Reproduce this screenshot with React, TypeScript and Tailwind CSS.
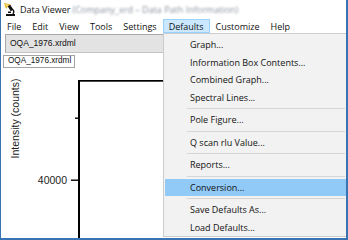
import React from "react";

const menuBar = ["File", "Edit", "View", "Tools", "Settings", "Defaults", "Customize", "Help"];

// null = separator
const defaultsMenu: (string | null)[] = [
  "Graph...",
  "Information Box Contents...",
  "Combined Graph...",
  "Spectral Lines...",
  null,
  "Pole Figure...",
  null,
  "Q scan rlu Value...",
  null,
  "Reports...",
  null,
  "Conversion...",
  null,
  "Save Defaults As...",
  "Load Defaults...",
];

function AppIcon() {
  return (
    <svg width="13" height="13" viewBox="0 0 13 13">
      <polygon points="0,0 7,1.5 4,3.5 2,6" fill="#e6b526" />
      <polygon points="1,1 5,2 3,4" fill="#f7dd7a" />
      <rect x="5" y="2" width="3" height="6" transform="rotate(-30 6.5 5)" fill="#111" />
      <path d="M8 6 Q11 8 9 11" stroke="#111" strokeWidth="1.4" fill="none" />
      <rect x="4" y="8.5" width="3" height="1.5" fill="#111" />
      <rect x="2" y="11" width="9" height="2" fill="#111" />
    </svg>
  );
}

export default function App() {
  return (
    <div className="relative w-[348px] h-[240px] overflow-hidden bg-white border-l border-r-2 border-b-2 border-[#3873b3] font-['Open_Sans',sans-serif] text-[9px] text-[#111] leading-none">
      {/* title bar */}
      <div className="flex items-center h-[18px] pl-[3px]">
        <AppIcon />
        <span className="ml-[3px]">Data Viewer</span>
        <span className="ml-[2px] text-[#8a93a0] blur-[1.3px] whitespace-nowrap">(Company_xrd – Data Path Information)</span>
      </div>

      {/* menu bar */}
      <div className="flex h-[15px] pt-[1px] pl-[1px] gap-[1px]">
        {menuBar.map((m) => (
          <div
            key={m}
            className={`flex items-center px-[5px] ${m === "Defaults" ? "bg-[#cce8ff] border border-[#99d1ff] px-[4px]" : ""}`}
          >
            {m}
          </div>
        ))}
      </div>

      {/* document area */}
      <div className="flex items-center ml-[4px] mt-[1px] w-[200px] h-[19px] bg-[#e3e3e3] border border-[#c4c4c4] border-t-[#a9a9a9] border-l-[#a9a9a9] pl-[4px] font-['Liberation_Sans',sans-serif] text-[8.5px]">
        OQA_1976.xrdml
      </div>
      <div className="flex items-center ml-[2px] mt-[2px] w-[72px] h-[13px] bg-white border border-[#a3a3a3] pl-[4px] font-['Liberation_Sans',sans-serif] text-[8.2px]">
        OQA_1976.xrdml
      </div>

      {/* plot */}
      <svg width="162" height="170" className="block font-['Liberation_Sans',sans-serif]">
        <rect x="77" y="12" width="90" height="1.7" fill="#000" />
        <rect x="77" y="12" width="2" height="160" fill="#000" />
        <rect x="74" y="49.5" width="4" height="1.4" fill="#000" />
        <rect x="70" y="111.5" width="8" height="1.4" fill="#000" />
        <text x="66" y="115.8" textAnchor="end" fontSize="10.5" fill="#222">40000</text>
        <text
          x="17.5"
          y="50.5"
          textAnchor="middle"
          fontSize="10.5"
          fill="#222"
          transform="rotate(-90 17.5 50.5)"
        >
          Intensity (counts)
        </text>
      </svg>

      {/* open Defaults menu */}
      <div className="absolute left-[162px] top-[33px] w-[185px] h-[204px] bg-[#f2f2f2] border border-[#cccccc] pt-[2px]">
        {defaultsMenu.map((item, i) =>
          item === null ? (
            <div key={i} className="flex items-center h-[5px]">
              <div className="h-px flex-1 ml-[23px] mr-[2px] bg-[#d5d5d5]" />
            </div>
          ) : (
            <div
              key={i}
              className={`flex items-center h-[17.5px] mx-[1px] pl-[25px] ${item === "Conversion..." ? "bg-[#91c9f7]" : ""}`}
            >
              {item}
            </div>
          )
        )}
      </div>
    </div>
  );
}
